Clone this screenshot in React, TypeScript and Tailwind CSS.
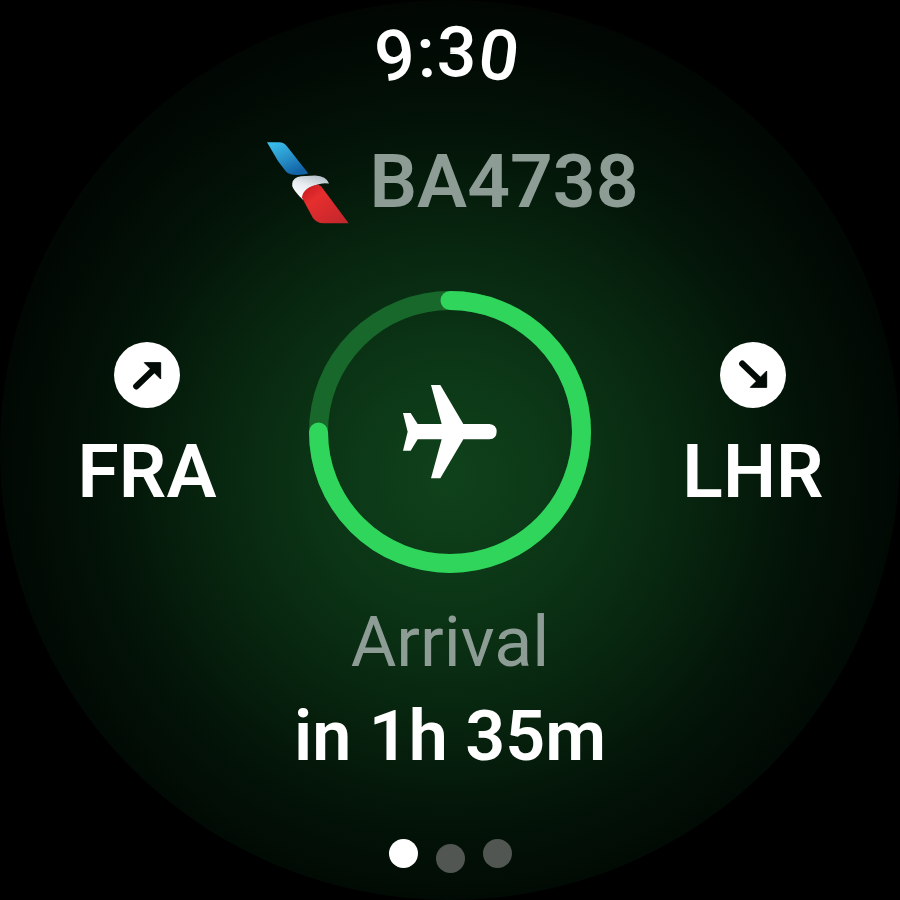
import React from 'react';

const AirlineLogo = () => (
    <svg className="size-[82px]" viewBox="35 37 247 247" role="img" aria-label="Airline">
        <defs>
            <linearGradient id="tail-blue" x1="0" y1="0" x2="0.6" y2="1">
                <stop offset="0" stopColor="#3cc4ee" />
                <stop offset="0.5" stopColor="#2a97cc" />
                <stop offset="1" stopColor="#1262a6" />
            </linearGradient>
            <linearGradient id="tail-white" x1="0.7" y1="0" x2="0.2" y2="1">
                <stop offset="0" stopColor="#b4c0c8" />
                <stop offset="0.45" stopColor="#e9edf2" />
                <stop offset="1" stopColor="#ffffff" />
            </linearGradient>
            <linearGradient id="tail-red" x1="0" y1="0" x2="0.9" y2="1">
                <stop offset="0" stopColor="#c4181f" />
                <stop offset="0.35" stopColor="#e62e2e" />
                <stop offset="1" stopColor="#c3262c" />
            </linearGradient>
        </defs>
        <path d="M35 38H72Q86 38 95 50L159 131Q147 137 116 136Q100 135 92 126L68 94Z" fill="url(#tail-blue)" />
        <path d="M111 162Q114 142 138 140L180 138Q214 140 222 162Q200 159 186 166Q148 178 144 212Q116 184 111 170Z" fill="url(#tail-white)" />
        <path d="M140 204Q146 172 188 165L198 170L281 282H205Q184 281 173 265Z" fill="url(#tail-red)" />
    </svg>
);

const FlightProgress = ({ progress }: { progress: number }) => (
    <svg className="size-[282px] shrink-0" viewBox="0 0 282 282" role="img" aria-label="Flight progress">
        <circle cx="141" cy="141" r="131.5" fill="none" stroke="#19682b" strokeWidth="19" />
        <circle
            cx="141"
            cy="141"
            r="131.5"
            fill="none"
            stroke="#30d65b"
            strokeWidth="19"
            strokeLinecap="round"
            pathLength="100"
            strokeDasharray={`${progress} 100`}
            transform="rotate(-90 141 141)"
        />
        <path
            transform="translate(80 79) scale(0.3333)"
            fill="#fff"
            d="M42 129H65L86 162H158L126 45H154L223 162H301Q323 164 323 185Q323 206 301 208H223L154 325H126L158 208H86L65 242H42L56 185Z"
        />
    </svg>
);

const Airport = ({ code, arriving = false }: { code: string; arriving?: boolean }) => (
    <div className="flex w-[140px] flex-col items-center gap-3">
        <svg
            className="size-[66px]"
            viewBox="0 0 198 198"
            role="img"
            aria-label={arriving ? 'Arrives at' : 'Departs from'}
        >
            <circle cx="99" cy="99" r="99" fill="#fff" />
            <g transform={arriving ? 'translate(0 198) scale(1 -1)' : undefined}>
                <path d="M67 133L124 78" stroke="#020b05" strokeWidth="19" strokeLinecap="round" />
                <path d="M91 62H140V111Z" fill="#020b05" stroke="#020b05" strokeWidth="3" strokeLinejoin="round" />
            </g>
        </svg>
        <span className="text-[75px] leading-[102px] font-semibold">{code}</span>
    </div>
);

const pages = ['Flight', 'Gate', 'Details'];

const App = () => {
    return (
        <div className="flex min-h-screen justify-center bg-black font-['Roboto',sans-serif] text-white">
            <main className="flex aspect-square w-full max-w-[900px] flex-col items-center rounded-full bg-[radial-gradient(circle_at_50%_53%,#0f421b_0%,#0c3817_16%,#082810_34%,#031408_52%,#010a04_66%,#010402_76%,#010402_100%)]">
                {/* Clock follows the edge of the dial */}
                <svg className="h-[90px] w-full overflow-visible" viewBox="0 0 900 90">
                    <path id="dial-edge" d="M73 450A374 374 0 0 1 821 450" fill="none" />
                    <text className="text-[70px] font-medium" fill="#fff" textAnchor="middle">
                        <textPath href="#dial-edge" startOffset="50%">9:30</textPath>
                    </text>
                </svg>

                <div className="mt-[52px] flex items-start gap-5 pl-1.5">
                    <AirlineLogo />
                    <h1 className="text-[75px] leading-[78px] font-semibold text-[#8d9c95]">BA4738</h1>
                </div>

                <div className="mt-[67px] flex items-center justify-center gap-[92px]">
                    <Airport code="FRA" />
                    <FlightProgress progress={75} />
                    <Airport code="LHR" arriving />
                </div>

                <div className="mt-[22px] text-center text-[70px] leading-[94px]">
                    <p className="text-[#8d9c95]">Arrival</p>
                    <p className="font-semibold">in 1h 35m</p>
                </div>

                <nav className="mt-14 flex h-[34px] gap-[18px]" aria-label="Pages">
                    {pages.map((page, i) => (
                        <button
                            key={page}
                            type="button"
                            aria-label={page}
                            className={`size-[29px] rounded-full ${i === 0 ? 'bg-white' : 'bg-[#515652]'} ${i === 1 ? 'self-end' : 'self-start'}`}
                        />
                    ))}
                </nav>
            </main>
        </div>
    );
};

export default App;
